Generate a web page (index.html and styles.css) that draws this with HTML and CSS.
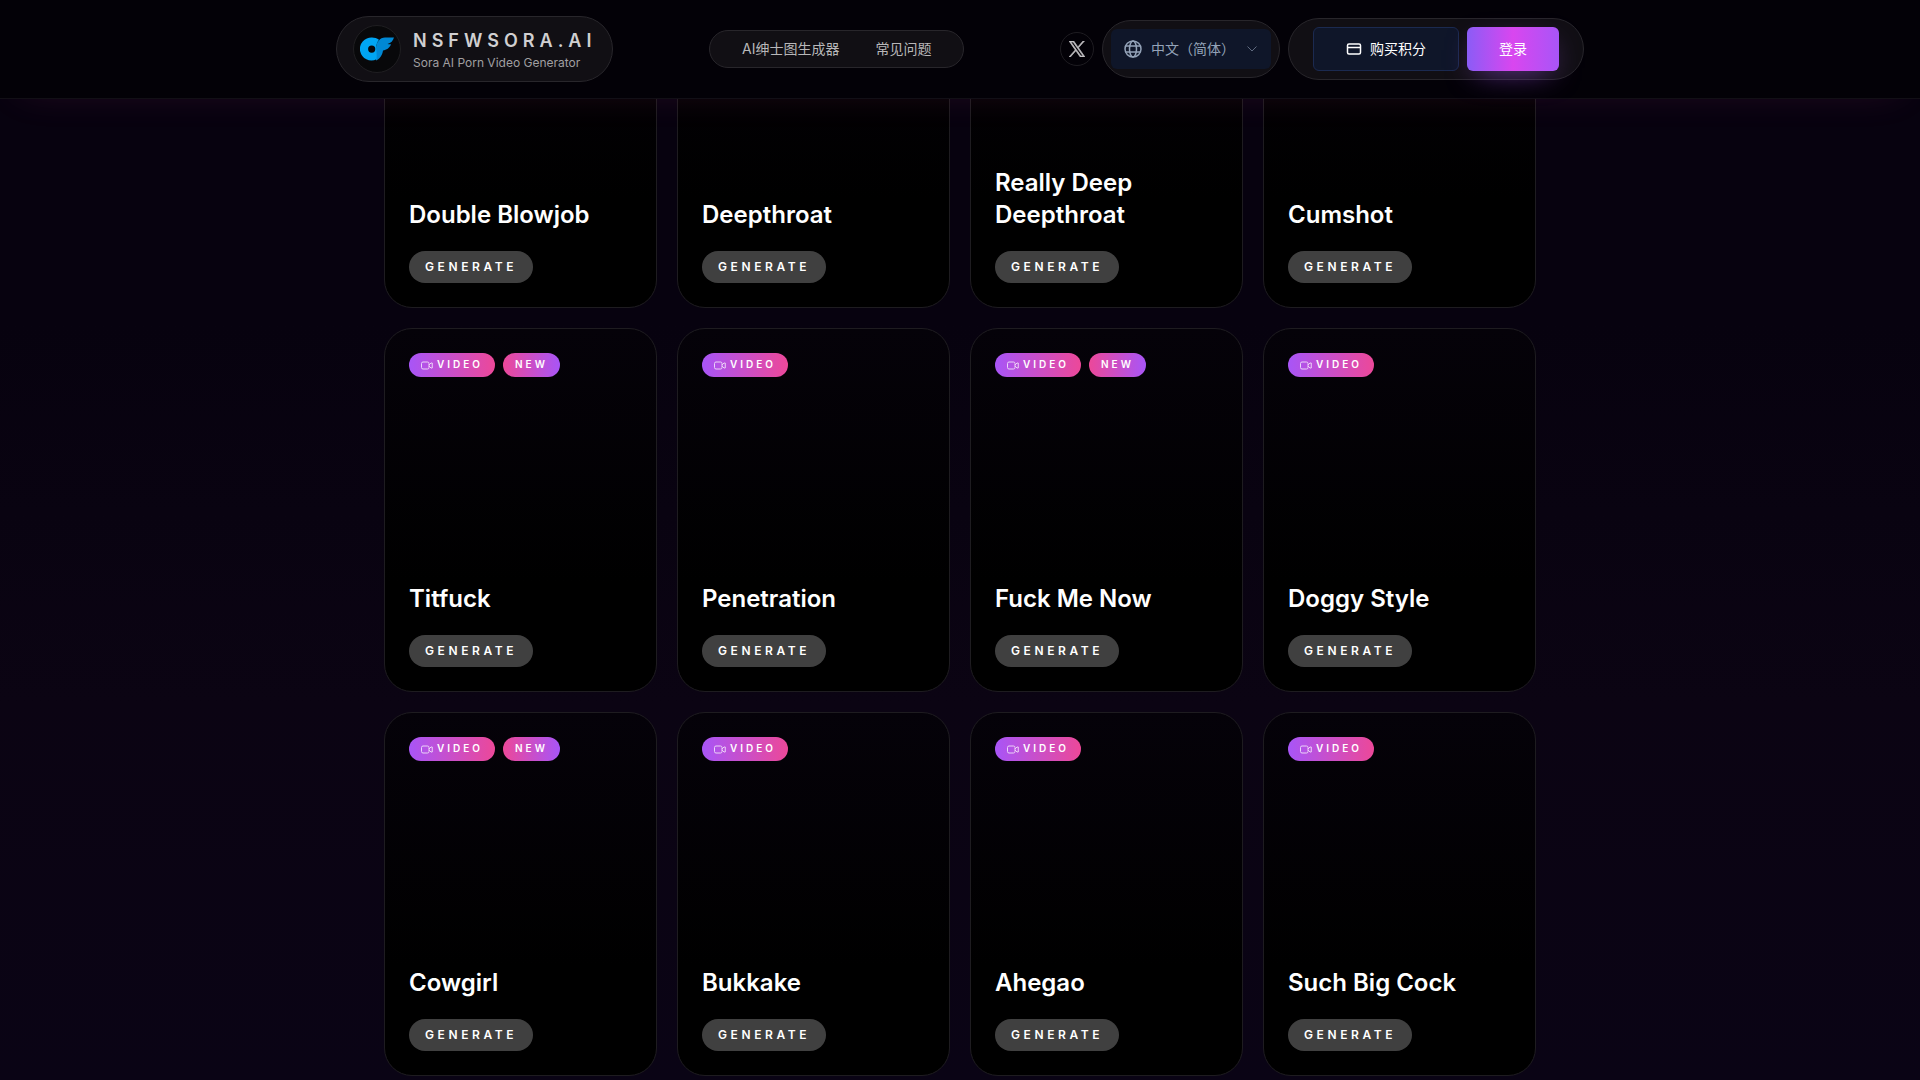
FILE: index.html
```html
<!DOCTYPE html>
<html lang="zh-CN">
<head>
<meta charset="utf-8">
<meta name="viewport" content="width=device-width, initial-scale=1">
<title>NSFWSORA.AI</title>
<link rel="stylesheet" href="styles.css">
</head>
<body>
<svg class="sprite" aria-hidden="true">
  <symbol id="video" viewBox="0 0 24 24"><rect x="1" y="6" width="15" height="14" rx="3"/><path d="M16 12l4-4h2.500v10h-2.500l-4-4"/></symbol>
</svg>
<header class="header">
  <div class="header-inner">
    <a class="brand" href="#">
      <span class="brand-mark">
        <svg viewBox="0 0 34 24" width="34" height="24" aria-hidden="true">
          <path fill="#0088d4" d="M16 12C16 5 20 .5 25 .5h9c-1 3.500-3 5.500-6.500 6.500 1.500.4 2.500.4 3.500.3-1.500 4-4.500 5.700-8 6.200-.5 5-4 9-7 10z"/>
          <path fill="#00a6f4" fill-rule="evenodd" d="M12 .5c2.500 0 5 .8 7 2.300-2.200 2.700-3.200 6-2.700 9.700.3 3 .5 6 .2 9.800A11.500 11.500 0 1 1 12 .5zm-.3 8a3.600 3.600 0 1 0 0 7.200 3.600 3.600 0 0 0 0-7.200z"/>
        </svg>
      </span>
      <span class="brand-text">
        <span class="brand-name">NSFWSORA.AI</span>
        <span class="brand-tag">Sora AI Porn Video Generator</span>
      </span>
    </a>
    <nav class="nav">
      <a href="#">AI绅士图生成器</a>
      <a href="#">常见问题</a>
    </nav>
    <div class="tools">
      <a class="social" href="#" aria-label="X">
        <svg viewBox="0 0 24 24" width="16" height="16" fill="currentColor" stroke="currentColor" stroke-width="1" aria-hidden="true"><path d="M14.258 10.152L23.176 0h-2.113l-7.747 8.813L7.133 0H0l9.352 13.328L0 23.973h2.113l8.176-9.309 6.531 9.309h7.133zm-2.895 3.293l-.949-1.328L2.875 1.560h3.246l6.086 8.523.945 1.328 7.910 11.078h-3.246z"/></svg>
      </a>
      <div class="lang">
        <label class="lang-field">
          <svg class="globe" viewBox="0 0 18 18" width="18" height="18" aria-hidden="true"><circle cx="9" cy="9" r="8"/><ellipse cx="9" cy="9" rx="3.500" ry="8"/><path d="M1.500 6h15M1.500 12h15"/></svg>
          <select aria-label="语言"><option>中文（简体）</option></select>
          <svg class="chevron" viewBox="0 0 12 12" width="12" height="12" aria-hidden="true"><path d="M1.500 3.500L6 8l4.500-4.500"/></svg>
        </label>
      </div>
      <div class="account">
        <button class="btn btn-buy" type="button">
          <svg viewBox="0 0 16 16" width="16" height="16" aria-hidden="true"><rect x="1.500" y="3" width="13" height="10" rx="1.500"/><path d="M1.500 6.500h13"/></svg>
          购买积分
        </button>
        <button class="btn btn-login" type="button">登录</button>
      </div>
    </div>
  </div>
</header>
<main class="gallery">
  <article class="card"><h2>Double Blowjob</h2><button class="generate" type="button">Generate</button></article>
  <article class="card"><h2>Deepthroat</h2><button class="generate" type="button">Generate</button></article>
  <article class="card"><h2>Really Deep Deepthroat</h2><button class="generate" type="button">Generate</button></article>
  <article class="card"><h2>Cumshot</h2><button class="generate" type="button">Generate</button></article>

  <article class="card"><div class="badges"><span class="badge video"><svg><use href="#video"/></svg>Video</span><span class="badge new">New</span></div><h2>Titfuck</h2><button class="generate" type="button">Generate</button></article>
  <article class="card"><div class="badges"><span class="badge video"><svg><use href="#video"/></svg>Video</span></div><h2>Penetration</h2><button class="generate" type="button">Generate</button></article>
  <article class="card"><div class="badges"><span class="badge video"><svg><use href="#video"/></svg>Video</span><span class="badge new">New</span></div><h2>Fuck Me Now</h2><button class="generate" type="button">Generate</button></article>
  <article class="card"><div class="badges"><span class="badge video"><svg><use href="#video"/></svg>Video</span></div><h2>Doggy Style</h2><button class="generate" type="button">Generate</button></article>

  <article class="card"><div class="badges"><span class="badge video"><svg><use href="#video"/></svg>Video</span><span class="badge new">New</span></div><h2>Cowgirl</h2><button class="generate" type="button">Generate</button></article>
  <article class="card"><div class="badges"><span class="badge video"><svg><use href="#video"/></svg>Video</span></div><h2>Bukkake</h2><button class="generate" type="button">Generate</button></article>
  <article class="card"><div class="badges"><span class="badge video"><svg><use href="#video"/></svg>Video</span></div><h2>Ahegao</h2><button class="generate" type="button">Generate</button></article>
  <article class="card"><div class="badges"><span class="badge video"><svg><use href="#video"/></svg>Video</span></div><h2>Such Big Cock</h2><button class="generate" type="button">Generate</button></article>
</main>
</body>
</html>
```
FILE: styles.css
```css
* { box-sizing: border-box; }

body {
  margin: 0;
  min-height: 100vh;
  background: linear-gradient(180deg, #07020f 0%, #07020f 30%, #0b0413 65%, #0a0415 100%);
  color: #fff;
  font-family: Inter, "Noto Sans CJK SC", sans-serif;
}

a { color: inherit; text-decoration: none; }
button, select { font: inherit; color: inherit; cursor: pointer; }
.sprite { display: none; }

/* Header */
.header {
  position: sticky;
  top: 0;
  z-index: 10;
  background: #030107;
  border-bottom: 1px solid #120f16;
  box-shadow: 0 10px 40px -20px rgba(236, 72, 153, 0.16);
}

.header-inner {
  display: flex;
  align-items: center;
  justify-content: space-between;
  max-width: 1280px;
  margin: 0 auto;
  padding: 16px;
}

.brand, .nav, .lang, .account {
  display: flex;
  align-items: center;
  border: 1px solid #28262b;
  border-radius: 40px;
  background: #110f14;
}

.brand { gap: 12px; padding: 8px 16px; }

.brand-mark {
  display: flex;
  align-items: center;
  justify-content: center;
  width: 48px;
  height: 48px;
  border: 1px solid #1f1e21;
  border-radius: 50%;
  background: #08080a;
}

.brand-text { display: flex; flex-direction: column; }

.brand-name {
  color: #d0cfd1;
  font-size: 18px;
  font-weight: 600;
  line-height: 28px;
  letter-spacing: 5px;
}

.brand-tag { color: #a09fa1; font-size: 12px; line-height: 16px; }

.nav {
  gap: 36px;
  padding: 8px 32px;
  color: #b8b7b9;
  font-size: 14px;
  line-height: 20px;
}

.tools { display: flex; align-items: center; gap: 8px; }

.social {
  display: flex;
  align-items: center;
  justify-content: center;
  width: 34px;
  height: 34px;
  border: 1px solid #1e1c21;
  border-radius: 50%;
  color: #c4c3c5;
}

.lang { padding: 8px; }

.lang-field {
  display: flex;
  align-items: center;
  width: 160px;
  height: 40px;
  padding: 0 13px;
  border-radius: 6px;
  background: #0f1629;
  color: #94a3b8;
}

.lang-field select {
  flex: 1;
  min-width: 0;
  height: 20px;
  margin-left: 9px;
  padding: 0;
  border: 0;
  appearance: none;
  background: transparent;
  font-size: 14px;
  line-height: 20px;
}

.globe, .chevron, .btn svg, .badge svg { fill: none; stroke: currentColor; }
.globe { stroke-width: 1.5; }
.chevron { opacity: 0.6; }

.account { gap: 8px; padding: 8px 24px; }

.btn {
  display: flex;
  align-items: center;
  gap: 8px;
  height: 44px;
  padding: 0 32px;
  border: 0;
  border-radius: 6px;
  font-size: 14px;
  line-height: 20px;
}

.btn svg { stroke-width: 1.5; }

.btn-buy { border: 1px solid #1b2a50; background: #0f1629; }

.btn-login {
  background: linear-gradient(90deg, #8b5cf6, #d946ef 50%, #a855f7);
  box-shadow: 0 10px 30px -10px rgba(168, 85, 247, 0.6);
}

/* The gallery is shown scrolled partly beneath the header */
.gallery {
  display: grid;
  grid-template-columns: repeat(4, 1fr);
  gap: 20px;
  max-width: 1152px;
  margin: -155px auto 0;
  padding-bottom: 4px;
}

.card {
  display: flex;
  flex-direction: column;
  align-items: flex-start;
  aspect-ratio: 3 / 4;
  padding: 24px;
  border: 1px solid #1e1c20;
  border-radius: 28px;
  background: linear-gradient(180deg, #050209, #000 70%);
}

.badges { display: flex; gap: 8px; }

.badge {
  display: flex;
  align-items: center;
  gap: 4px;
  height: 24px;
  padding: 4px 12px 5px;
  border-radius: 12px;
  font-size: 10px;
  font-weight: 600;
  line-height: 15px;
  letter-spacing: 3px;
  text-transform: uppercase;
}

.badge svg { width: 12px; height: 12px; stroke-width: 2; opacity: 0.75; }
.video { background: linear-gradient(90deg, #a855f7, #ec4899); }
.new { background: linear-gradient(90deg, #ec4899, #a855f7); }

.card h2 {
  margin: auto 0 20px;
  font-size: 24px;
  font-weight: 600;
  line-height: 32px;
}

.generate {
  height: 32px;
  padding: 0 16px;
  border: 0;
  border-radius: 16px;
  background: #404040;
  font-size: 12px;
  font-weight: 600;
  line-height: 16px;
  letter-spacing: 0.3em;
  text-transform: uppercase;
}
```
